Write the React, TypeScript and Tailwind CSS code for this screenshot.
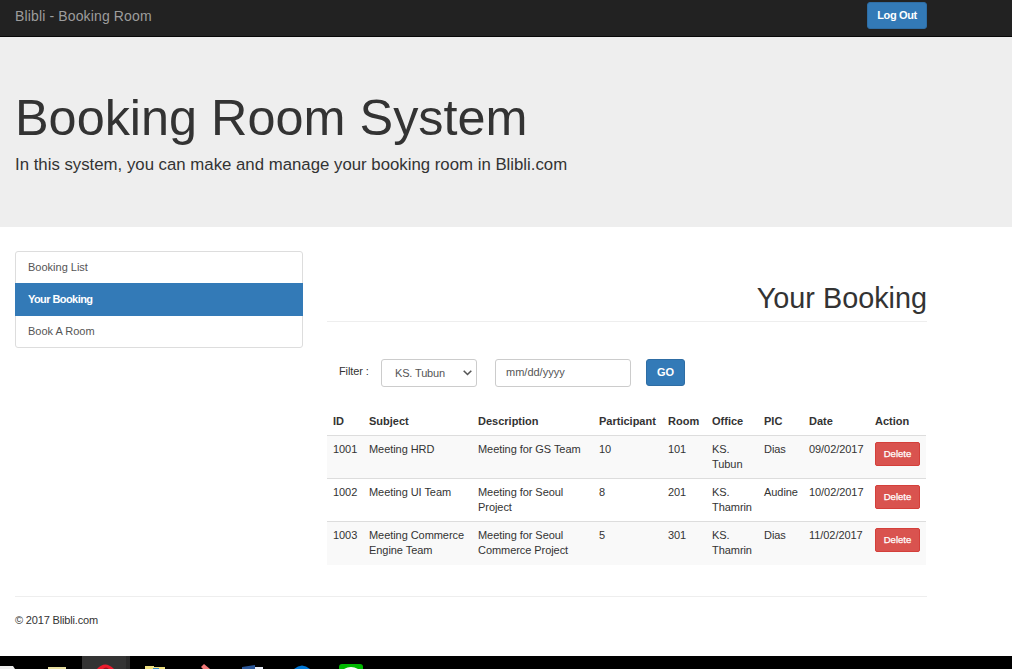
const navItems = ["Booking List", "Your Booking", "Book A Room"];

const columns = [
  { label: "ID", width: "w-[36px]" },
  { label: "Subject", width: "w-[109px]" },
  { label: "Description", width: "w-[121px]" },
  { label: "Participant", width: "w-[69px]" },
  { label: "Room", width: "w-[44px]" },
  { label: "Office", width: "w-[52px]" },
  { label: "PIC", width: "w-[45px]" },
  { label: "Date", width: "w-[66px]" },
  { label: "Action", width: "w-[57px]" },
];

const bookings = [
  ["1001", "Meeting HRD", "Meeting for GS Team", "10", "101", "KS. Tubun", "Dias", "09/02/2017"],
  ["1002", "Meeting UI Team", "Meeting for Seoul Project", "8", "201", "KS. Thamrin", "Audine", "10/02/2017"],
  ["1003", "Meeting Commerce Engine Team", "Meeting for Seoul Commerce Project", "5", "301", "KS. Thamrin", "Dias", "11/02/2017"],
];

function Header() {
  return (
    <nav className="flex h-[37px] items-start border-b border-[#080808] bg-[#222] pl-[15px]">
      <span className="mt-[6px] w-[852px] text-[14px] leading-5 tracking-[0.14px] text-[#9d9d9d]">Blibli - Booking Room</span>
      <button className="mt-[2px] h-[27px] w-[60px] rounded-[3px] border border-[#2e6da4] bg-[#337ab7] text-[11px] leading-none font-bold tracking-[-0.35px] text-white">
        Log Out
      </button>
    </nav>
  );
}

function Sidebar() {
  return (
    <ul className="h-[97px] w-[288px] rounded-[3px] border border-[#ddd]">
      {navItems.map((item) => (
        <li
          key={item}
          className={
            item === "Your Booking"
              ? "-mx-px flex h-[33px] items-center bg-[#337ab7] pl-[13px] font-bold tracking-[-0.57px] text-white"
              : "flex h-[31px] items-center pl-[12px] text-[#555]"
          }
        >
          {item}
        </li>
      ))}
    </ul>
  );
}

function Filters() {
  return (
    <div className="mt-[37px] flex h-[28px] pl-[12px]">
      <span className="mt-[5px] w-[42px] leading-[15px] tracking-[-0.1px]">Filter :</span>
      <div className="flex w-[96px] items-center justify-between rounded-[3px] border border-[#ccc] pr-[4px] pl-[13px] text-[#555]">
        <span className="tracking-[-0.15px]">KS. Tubun</span>
        <svg width="9" height="6" viewBox="0 0 9 6" fill="none" stroke="#555" strokeWidth="1.6">
          <path d="M0.7 0.8 L4.5 4.5 L8.3 0.8" />
        </svg>
      </div>
      <div className="ml-[18px] w-[136px] rounded-[3px] border border-[#ccc] pt-[5px] pl-[10px] leading-[15px] text-[#555]">
        mm/dd/yyyy
      </div>
      <button className="ml-[15px] h-[27px] w-[39px] rounded-[3px] border border-[#2e6da4] bg-[#337ab7] leading-none font-bold text-white">
        GO
      </button>
    </div>
  );
}

function BookingTable() {
  return (
    <table className="mt-[20px] w-[599px] table-fixed border-collapse text-left">
      <thead>
        <tr className="h-[28px]">
          {columns.map((c) => (
            <th key={c.label} className={`${c.width} pt-[7px] pb-[6px] pl-[6px] align-top leading-[15px] font-bold`}>
              {c.label}
            </th>
          ))}
        </tr>
      </thead>
      <tbody>
        {bookings.map((row) => (
          <tr key={row[0]} className="h-[43px] border-t border-[#ddd] odd:bg-[#f9f9f9]">
            {row.map((value, i) => (
              <td key={i} className="pt-[6px] pl-[6px] align-top leading-[15px] tracking-[-0.06px]">
                {value}
              </td>
            ))}
            <td className="pt-[6px] pl-[6px] align-top">
              <button className="block h-[24px] w-[45px] rounded-[2px] border border-[#d43f3a] bg-[#d9534f] text-[9.6px] leading-none text-white [-webkit-text-stroke:0.25px_white]">
                Delete
              </button>
            </td>
          </tr>
        ))}
      </tbody>
    </table>
  );
}

function Taskbar() {
  return (
    <div className="h-[13px] bg-black">
      <svg width="400" height="13" viewBox="0 0 400 13" className="block">
        <rect x="82" width="48" height="13" fill="#333" />
        <rect x="126" width="4" height="13" fill="#292929" />
        <path d="M0 10h13l2 3H0z" fill="#eee" />
        <rect x="48" y="11" width="18" height="2" fill="#e8dfa0" />
        <path d="M97 13q8-9 17 0z" fill="#ed1c2e" />
        <path d="M103 13q3-3 6 0z" fill="#8b1720" />
        <path d="M145 10h9v1h11v2h-20z" fill="#eee080" />
        <path d="M153 12h6v1h-6z" fill="#3d8bc4" />
        <path d="M201 11l3-3 6 5h-7z" fill="#f27878" />
        <path d="M255 11h8v2h-8z" fill="#e9edf7" />
        <path d="M242 11l13-2v4h-13z" fill="#2b579a" />
        <path d="M294 13q8-7 16 0z" fill="#0078d7" />
        <path d="M339 13v-2q0-3 3-3h18q3 0 3 3v2z" fill="#00b900" />
        <path d="M344 13q7-4 14 0z" fill="#fff" />
      </svg>
    </div>
  );
}

export default function App() {
  return (
    <div className="flex h-[669px] w-[1012px] flex-col overflow-hidden bg-white font-['Liberation_Sans',Arial,sans-serif] text-[11px] leading-[15px] text-[#333]">
      <Header />
      <header className="h-[190px] bg-[#eee] pt-[53px] pl-[15px]">
        <h1 className="text-[50.4px] leading-[55px]">Booking Room System</h1>
        <p className="mt-[8px] text-[16.8px] leading-[24px]">In this system, you can make and manage your booking room in Blibli.com</p>
      </header>
      <div className="flex h-[369px] gap-[24px] pt-[24px] pl-[15px]">
        <Sidebar />
        <main className="w-[600px]">
          <h2 className="h-[71px] border-b border-[#eee] pt-[31px] text-right text-[28.8px] leading-[32px]">Your Booking</h2>
          <Filters />
          <BookingTable />
        </main>
      </div>
      <footer className="ml-[15px] h-[60px] w-[912px] border-t border-[#eee] pt-[16px] tracking-[-0.16px]">© 2017 Blibli.com</footer>
      <Taskbar />
    </div>
  );
}
